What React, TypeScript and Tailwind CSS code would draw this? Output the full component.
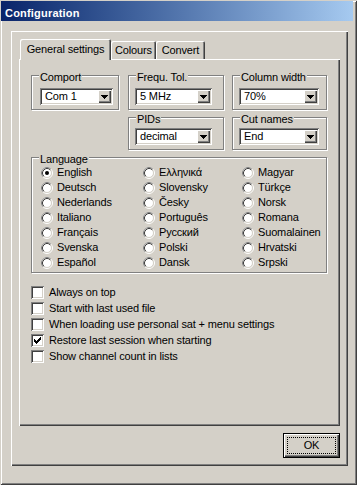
import React from "react";

const raised = "shadow-[inset_1px_1px_#fff,inset_-1px_-1px_#404040,inset_-2px_-2px_#808080]";
const sunken = "shadow-[inset_1px_1px_#808080,inset_-1px_-1px_#fff,inset_2px_2px_#404040,inset_-2px_-2px_#d4d0c8]";

function GroupBox({ label, className, children }: { label: string; className: string; children: React.ReactNode }) {
  return (
    <div className={`relative border border-[#808080] shadow-[inset_1px_1px_#fff,1px_1px_#fff] ${className}`}>
      <span className="absolute left-[7px] top-[-5px] bg-[#d4d0c8] px-[1px] leading-[13px]">{label}</span>
      {children}
    </div>
  );
}

function Arrow() {
  return (
    <svg width="7" height="4" viewBox="0 0 7 4" shapeRendering="crispEdges">
      <rect x="0" y="0" width="7" height="1" />
      <rect x="1" y="1" width="5" height="1" />
      <rect x="2" y="2" width="3" height="1" />
      <rect x="3" y="3" width="1" height="1" />
    </svg>
  );
}

function Combo({ value, className }: { value: string; className: string }) {
  return (
    <div className={`flex h-[17px] bg-white ${sunken} ${className}`}>
      <span className="flex-1 pl-[5px] leading-[17px]">{value}</span>
      <div className={`mr-[2px] mt-[2px] flex h-[13px] w-[13px] items-center justify-center bg-[#d4d0c8] ${raised}`}>
        <Arrow />
      </div>
    </div>
  );
}

function Radio({ checked }: { checked?: boolean }) {
  return (
    <svg width="12" height="12" viewBox="0 0 12 12" className="shrink-0">
      <circle cx="6" cy="6" r="5.5" fill="none" stroke="#fff" />
      <path d="M2.11 9.89 A5.5 5.5 0 0 1 9.89 2.11" fill="none" stroke="#808080" />
      <circle cx="6" cy="6" r="4.5" fill="#fff" stroke="#d4d0c8" />
      <path d="M2.82 9.18 A4.5 4.5 0 0 1 9.18 2.82" fill="none" stroke="#404040" />
      {checked && <circle cx="6" cy="6" r="2" fill="#000" />}
    </svg>
  );
}

const checkCols = [2, 3, 4, 3, 2, 1, 0];

function CheckBox({ checked }: { checked?: boolean }) {
  return (
    <div className={`flex h-[13px] w-[13px] shrink-0 items-center justify-center bg-white ${sunken}`}>
      {checked && (
        <svg width="7" height="7" viewBox="0 0 7 7" shapeRendering="crispEdges">
          {checkCols.map((y, x) => (
            <rect key={x} x={x} y={y} width="1" height="3" />
          ))}
        </svg>
      )}
    </div>
  );
}

const languages = [
  ["English", "Deutsch", "Nederlands", "Italiano", "Français", "Svenska", "Español"],
  ["Ελληνικά", "Slovensky", "Česky", "Português", "Русский", "Polski", "Dansk"],
  ["Magyar", "Türkçe", "Norsk", "Romana", "Suomalainen", "Hrvatski", "Srpski"],
];
const colWidths = ["w-[102px]", "w-[99px]", "flex-1"];

const options = [
  "Always on top",
  "Start with last used file",
  "When loading use personal sat + menu settings",
  "Restore last session when starting",
  "Show channel count in lists",
];

export default function App() {
  return (
    <div className="flex h-[485px] w-[357px] flex-col bg-[#d4d0c8] font-['Liberation_Sans',Arial,sans-serif] text-[11px] tracking-[-0.15px] text-black shadow-[inset_1px_1px_#d4d0c8,inset_-1px_-1px_#404040,inset_2px_2px_#fff,inset_-2px_-2px_#808080]">
      <div className="ml-[1px] mt-[1px] h-[20px] w-[352px] bg-linear-to-r from-[#0a246a] to-[#a6caf0] pl-[4px] pt-[6px] font-bold leading-[13px] tracking-[0.2px] text-white">
        Configuration
      </div>

      <div className={`ml-[11px] mt-[10px] flex h-[435px] w-[337px] flex-col px-[8px] pt-[8px] ${raised}`}>
        {/* tabs */}
        <div className="flex h-[20px] items-end pl-[1px]">
          <div className="relative z-10 -mb-[1px] h-[21px] w-[91px] rounded-t-[2px] bg-[#d4d0c8] pt-[4px] text-center leading-[13px] shadow-[inset_1px_1px_#fff,inset_-1px_0_#404040,inset_-2px_0_#808080]">
            General settings
          </div>
          <div className="h-[18px] w-[45px] rounded-t-[2px] pt-[3px] text-center leading-[13px] shadow-[inset_1px_1px_#fff,inset_-1px_0_#404040,inset_-2px_0_#808080]">
            Colours
          </div>
          <div className="h-[18px] w-[49px] rounded-t-[2px] pt-[3px] text-center leading-[13px] shadow-[inset_1px_1px_#fff,inset_-1px_0_#404040,inset_-2px_0_#808080]">
            Convert
          </div>
        </div>

        {/* tab page */}
        <div className={`relative flex h-[367px] w-[321px] flex-col pl-[12px] pt-[16px] ${raised}`}>
          <div className="flex">
            <GroupBox label="Comport" className="h-[35px] w-[88px] pl-[8px] pt-[12px]">
              <Combo value="Com 1" className="w-[73px]" />
            </GroupBox>
            <GroupBox label="Frequ. Tol." className="ml-[9px] h-[35px] w-[96px] pl-[6px] pt-[12px]">
              <Combo value="5 MHz" className="w-[77px]" />
            </GroupBox>
            <GroupBox label="Column width" className="ml-[8px] h-[35px] w-[95px] pl-[6px] pt-[12px]">
              <Combo value="70%" className="w-[80px]" />
            </GroupBox>
          </div>

          <div className="mt-[7px] flex pl-[97px]">
            <GroupBox label="PIDs" className="h-[33px] w-[96px] pl-[6px] pt-[10px]">
              <Combo value="decimal" className="w-[77px]" />
            </GroupBox>
            <GroupBox label="Cut names" className="ml-[8px] h-[33px] w-[95px] pl-[6px] pt-[10px]">
              <Combo value="End" className="w-[80px]" />
            </GroupBox>
          </div>

          <GroupBox label="Language" className="mt-[7px] flex h-[116px] w-[296px] pl-[9px] pt-[7px]">
            {languages.map((col, ci) => (
              <div key={ci} className={`flex flex-col ${colWidths[ci]}`}>
                {col.map((lang, i) => (
                  <div key={lang} className="flex h-[15px] items-center gap-[4px] leading-[15px]">
                    <Radio checked={ci === 0 && i === 0} />
                    <span>{lang}</span>
                  </div>
                ))}
              </div>
            ))}
          </GroupBox>

          <div className="mt-[11px] flex flex-col">
            {options.map((o, i) => (
              <div key={o} className="flex h-[16px] items-center gap-[5px]">
                <CheckBox checked={i === 3} />
                <span>{o}</span>
              </div>
            ))}
          </div>
        </div>

        <div className="mt-[7px] flex w-[321px] justify-end">
          <div className="flex h-[25px] w-[57px] border border-black bg-[#d4d0c8] shadow-[inset_1px_1px_#fff,inset_-1px_-1px_#404040,inset_-2px_-2px_#808080]">
            <div className="m-[3px] flex flex-1 items-center justify-center border border-dotted border-black leading-[13px]">
              OK
            </div>
          </div>
        </div>
      </div>
    </div>
  );
}
